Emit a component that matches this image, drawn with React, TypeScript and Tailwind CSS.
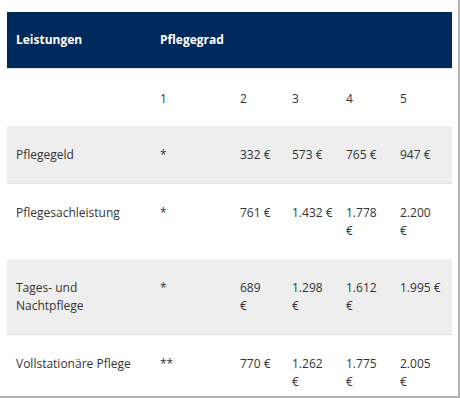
import React from 'react';

type Row = {
  label: string[];
  grade1: string;
  values: string[][];
  shaded: boolean;
};

const rows: Row[] = [
  { label: ['Pflegegeld'], grade1: '*', values: [['332 €'], ['573 €'], ['765 €'], ['947 €']], shaded: true },
  {
    label: ['Pflegesachleistung'],
    grade1: '*',
    values: [['761 €'], ['1.432 €'], ['1.778', '€'], ['2.200', '€']],
    shaded: false,
  },
  {
    label: ['Tages- und', 'Nachtpflege'],
    grade1: '*',
    values: [['689', '€'], ['1.298', '€'], ['1.612', '€'], ['1.995 €']],
    shaded: true,
  },
  {
    label: ['Vollstationäre Pflege'],
    grade1: '**',
    values: [['770 €'], ['1.262', '€'], ['1.775', '€'], ['2.005', '€']],
    shaded: false,
  },
];

const Lines: React.FC<{ lines: string[] }> = ({ lines }) => (
  <>
    {lines.map((l, i) => (
      <span key={i} className="block whitespace-nowrap">
        {l}
      </span>
    ))}
  </>
);

const App: React.FC = () => {
  return (
    <div className="w-[460px] h-[398px] bg-white border-r-2 border-b-2 border-[#b4b4b4] pl-[7px] pt-3 overflow-hidden font-['Open_Sans',sans-serif] text-[12px] leading-[18px] text-[#333333]">
      <table className="w-[445px] table-fixed border-collapse">
        <colgroup>
          <col className="w-[144px]" />
          <col className="w-[80px]" />
          <col className="w-[52px]" />
          <col className="w-[54px]" />
          <col className="w-[54px]" />
          <col className="w-[61px]" />
        </colgroup>
        <thead>
          {/* Header bar */}
          <tr className="bg-[#002a5c] text-white font-bold h-[56px]">
            <th className="text-left align-middle pl-[9px]">Leistungen</th>
            <th colSpan={5} className="text-left align-middle pl-[9px]">
              Pflegegrad
            </th>
          </tr>
        </thead>
        <tbody>
          <tr className="h-[58px] border-t border-[#dcdfe4]">
            <td />
            {['1', '2', '3', '4', '5'].map((g) => (
              <td key={g} className="pl-[9px] pt-[4px] align-middle">
                {g}
              </td>
            ))}
          </tr>
          {rows.map((r) => (
            <tr key={r.label.join(' ')} className={r.shaded ? 'bg-[#eeeeee] border-b border-[#e2e2e2]' : ''}>
              <td className="pl-[9px] pt-[20px] pb-[19px] align-top">
                <Lines lines={r.label} />
              </td>
              <td className="pl-[9px] pt-[20px] pb-[19px] align-top">{r.grade1}</td>
              {r.values.map((v, i) => (
                <td key={i} className="pl-[9px] pt-[20px] pb-[19px] align-top">
                  <Lines lines={v} />
                </td>
              ))}
            </tr>
          ))}
        </tbody>
      </table>
    </div>
  );
};

export default App;
